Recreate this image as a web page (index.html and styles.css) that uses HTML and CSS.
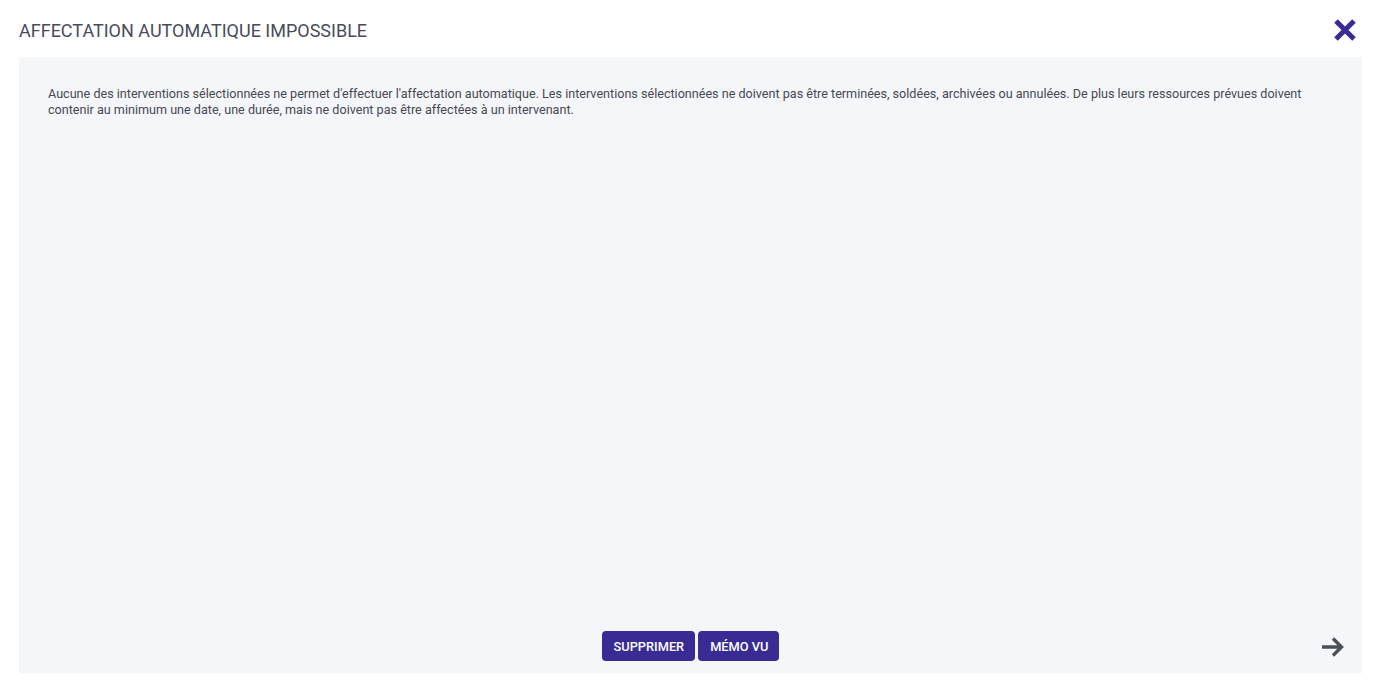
FILE: index.html
```html
<!DOCTYPE html>
<html>
<head>
    <title>Affectation automatique impossible</title>
    <link rel="stylesheet" href="styles.css">
</head>
<body>
    <div class="dialog">
        <div class="dialog-header">
            <h1 class="dialog-title">AFFECTATION AUTOMATIQUE IMPOSSIBLE</h1>
            <span class="close">
                <svg width="24" height="24" viewBox="0 0 24 24">
                    <path d="M3 3 L21 21 M21 3 L3 21" stroke="#382c94" stroke-width="5" stroke-linecap="butt"/>
                </svg>
            </span>
        </div>
        <div class="dialog-body">
            <p class="message">Aucune des interventions sélectionnées ne permet d'effectuer l'affectation automatique. Les interventions sélectionnées ne doivent pas être terminées, soldées, archivées ou annulées. De plus leurs ressources prévues doivent contenir au minimum une date, une durée, mais ne doivent pas être affectées à un intervenant.</p>
            <div class="dialog-footer">
                <div></div>
                <div class="actions">
                    <button class="btn">SUPPRIMER</button>
                    <button class="btn">MÉMO VU</button>
                </div>
                <span class="next">
                    <svg width="24" height="22" viewBox="0 0 24 22">
                        <path d="M1 11 H20 M12 2.5 L20.5 11 L12 19.5" fill="none" stroke="#4a5058" stroke-width="3.4"/>
                    </svg>
                </span>
            </div>
        </div>
    </div>
</body>
</html>
```

FILE: styles.css
```css
html, body {
  margin: 0;
  padding: 0;
  background: #ffffff;
  font-family: Roboto, "Liberation Sans", sans-serif;
}

.dialog {
  height: 696px;
  box-sizing: border-box;
  padding: 0 22px 23px 19px;
  display: flex;
  flex-direction: column;
}

.dialog-header {
  height: 57px;
  display: flex;
  align-items: center;
  justify-content: space-between;
}

.dialog-title {
  margin: 0;
  font-size: 18px;
  font-weight: 400;
  color: #4a4b5a;
  padding-top: 4px;
}

.close {
  display: flex;
  margin-right: 5px;
  margin-top: 2px;
  cursor: pointer;
}

.dialog-body {
  flex: 1;
  background: #f5f6fa;
  display: flex;
  flex-direction: column;
  padding: 29px 17px 12px 17px;
}

.message {
  margin: 0;
  padding: 0 12px;
  flex: 1;
  font-size: 12.6px;
  line-height: 16px;
  color: #464951;
}

.dialog-footer {
  display: grid;
  grid-template-columns: 1fr auto 1fr;
  align-items: center;
}

.actions {
  display: flex;
  gap: 3px;
}

.btn {
  height: 30px;
  padding: 0 11px 0 12px;
  background: #382c94;
  color: #ffffff;
  border: none;
  border-radius: 4px;
  font-family: Roboto, "Liberation Sans", sans-serif;
  font-size: 12.8px;
  font-weight: 500;
  cursor: pointer;
}

.next {
  justify-self: end;
  display: flex;
  margin-top: 2px;
}
```
